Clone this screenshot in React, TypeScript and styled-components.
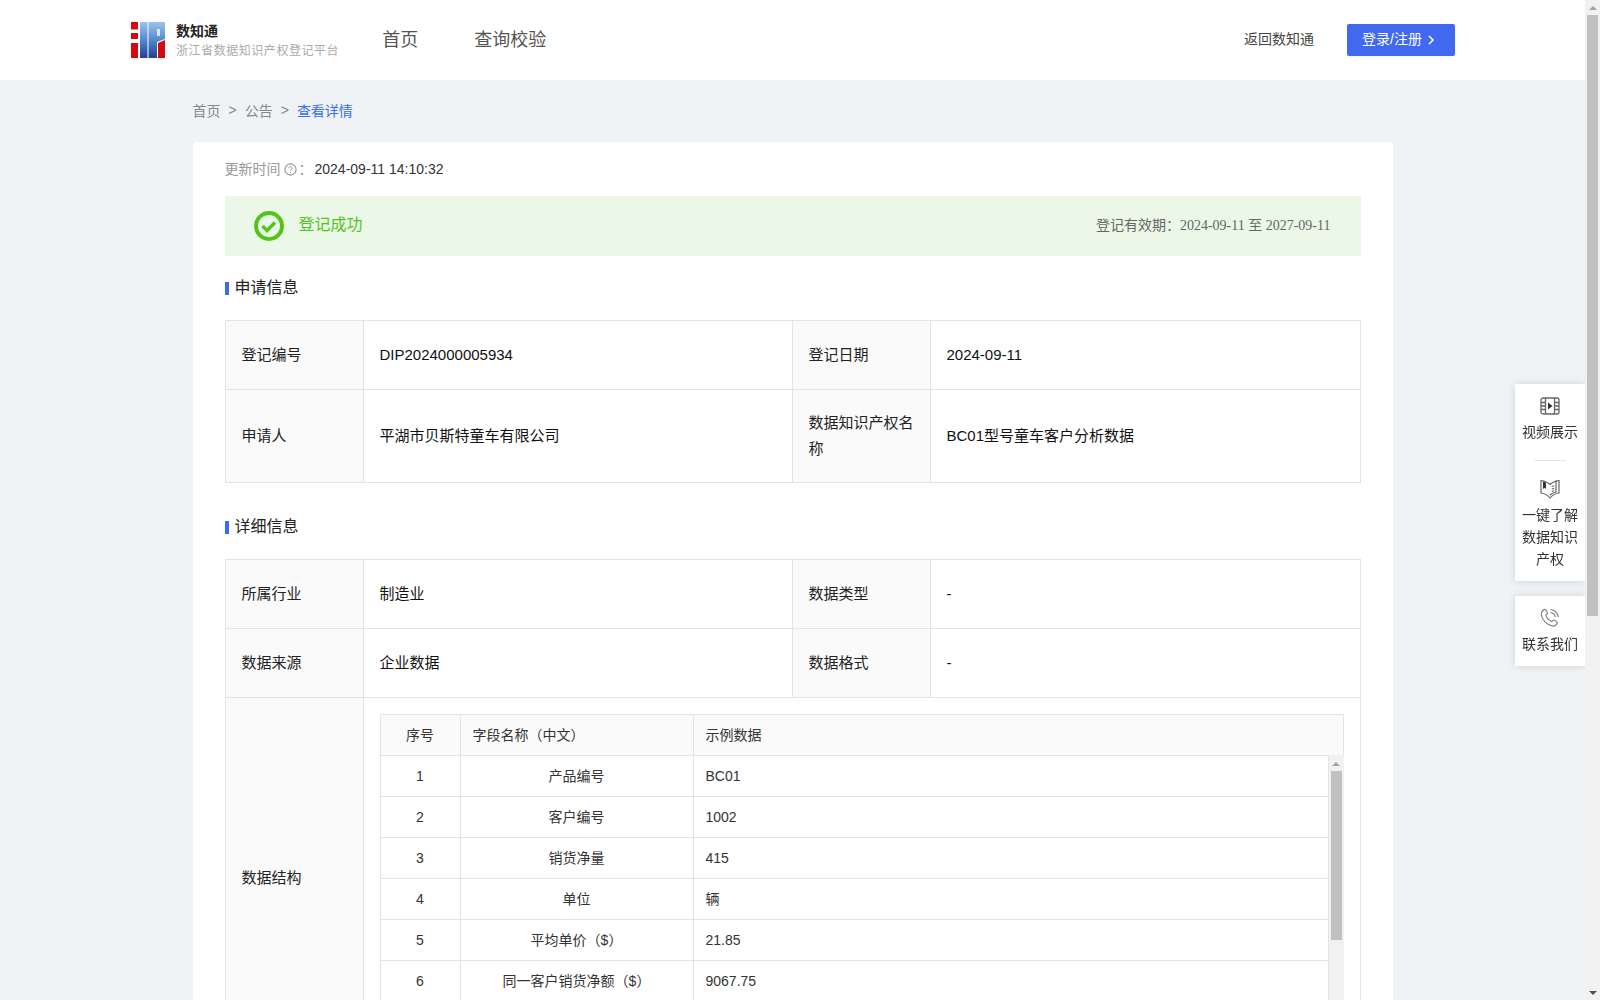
import React from "react";
import styled, { createGlobalStyle } from "styled-components";

const CJK = `"Liberation Sans", "Noto Sans CJK SC", sans-serif`;

const Global = createGlobalStyle`
  body { margin: 0; background: #eff3f6; font-family: ${CJK}; color: #222; }
  * { box-sizing: border-box; }
`;

const Page = styled.div`
  width: 1585px;
`;
const Header = styled.header`
  height: 80px;
  background: #fff;
  display: flex;
  align-items: center;
  justify-content: space-between;
  padding: 0 130px 0 131px;
`;
const Left = styled.div`
  display: flex;
  align-items: center;
`;
const Brand = styled.div`
  display: flex;
  align-items: center;
  gap: 11px;
  margin-right: 43px;
`;
const BrandText = styled.div`
  display: flex;
  flex-direction: column;
  gap: 1px;
`;
const BrandName = styled.div`
  font-size: 14px;
  line-height: 20px;
  font-weight: 700;
  color: #222;
`;
const BrandSub = styled.div`
  font-size: 12px;
  line-height: 18px;
  letter-spacing: 0.55px;
  color: #aaa;
`;
const Nav = styled.nav`
  display: flex;
  gap: 56px;
`;
const NavLink = styled.a`
  font-size: 18px;
  color: #555;
  line-height: 24px;
`;
const Right = styled.div`
  display: flex;
  align-items: center;
  gap: 33px;
`;
const BackLink = styled.a`
  font-size: 14px;
  color: #444;
  padding-bottom: 5px;
`;
const LoginButton = styled.button`
  width: 108px;
  height: 32px;
  border: 0;
  border-radius: 2px;
  background: #4169f0;
  box-shadow: 0 2px 2px rgba(0, 0, 0, 0.04);
  color: #fff;
  font-family: ${CJK};
  font-size: 14px;
  display: flex;
  align-items: center;
  justify-content: center;
  gap: 5px;
  padding: 0 5px 5px 0;
`;
const ChevronSlot = styled.span`
  display: flex;
  padding-top: 5px;
`;

const Main = styled.main`
  width: 1200px;
  margin: 0 auto;
`;
const Crumbs = styled.div`
  height: 62px;
  padding-bottom: 3px;
  display: flex;
  align-items: center;
  font-size: 14px;
  color: #888;
`;
const CrumbSep = styled.span`
  margin: 0 8px;
`;
const CrumbNow = styled.span`
  color: #3a6cf4;
`;
const Card = styled.section`
  background: #fff;
  border-radius: 4px 4px 0 0;
  padding: 16px 32px 32px;
`;
const UpdateRow = styled.div`
  display: flex;
  align-items: center;
  height: 22px;
  font-size: 14px;
  color: #999;
`;
const UpdateLabel = styled.span`
  padding-bottom: 2px;
`;
const UpdateValue = styled.span`
  margin-left: 2px;
  color: #333;
`;
const Banner = styled.div`
  margin-top: 16px;
  height: 60px;
  background: #ebf7e7;
  display: flex;
  align-items: center;
  justify-content: space-between;
  padding: 0 30px 0 29px;
`;
const BannerStatus = styled.div`
  display: flex;
  align-items: center;
  gap: 15px;
  font-size: 16px;
  color: #52c41a;
`;
const BannerLabel = styled.span`
  padding-bottom: 6px;
`;
const Validity = styled.div`
  font-size: 14px;
  color: #666;
  padding-bottom: 5px;
`;
const SerifDate = styled.span`
  font-family: "Liberation Serif", "Noto Sans CJK SC", serif;
`;
const SectionTitle = styled.h3<{ $top: number }>`
  margin: ${(p) => p.$top}px 0 21px;
  height: 22px;
  display: flex;
  align-items: center;
  gap: 6px;
  font-size: 16px;
  font-weight: 400;
  color: #222;
  &::before {
    content: "";
    width: 4px;
    height: 13px;
    margin-top: 1px;
    background: #4169f0;
  }
`;
const SectionLabel = styled.span`
  padding-bottom: 5px;
`;
const InfoTable = styled.table`
  width: 1136px;
  border-collapse: collapse;
  table-layout: fixed;
  font-size: 15px;
  line-height: 26px;
`;
const LabelCell = styled.td`
  width: 138px;
  height: 69px;
  padding: 20px 16px;
  background: #fafafa;
  border: 1px solid #e4e4e4;
  color: #222;
`;
const ValueCell = styled.td`
  padding: 20px 16px;
  background: #fff;
  border: 1px solid #e4e4e4;
  color: #111;
`;
const NestedCell = styled(ValueCell)`
  padding: 16px;
`;
const FieldsTable = styled.table`
  width: 100%;
  border-collapse: collapse;
  table-layout: fixed;
  font-size: 14px;
  color: #333;
`;
const FieldsBody = styled.div`
  display: flex;
  height: 287px;
  margin-top: -1px;
`;
const FieldsScroll = styled.div`
  flex: 1;
  min-width: 0;
  overflow: hidden;
`;
const FieldHeadCell = styled.th<{ $center?: boolean }>`
  height: 41px;
  padding: 0 12px;
  font-weight: 400;
  background: #fafafa;
  border: 1px solid #e4e4e4;
  text-align: ${(p) => (p.$center ? "center" : "left")};
`;
const FieldCell = styled.td<{ $center?: boolean }>`
  height: 41px;
  padding: 0 12px;
  border: 1px solid #e4e4e4;
  text-align: ${(p) => (p.$center ? "center" : "left")};
`;

const BarTrack = styled.div`
  flex: none;
  width: 15px;
  background: #f1f1f1;
  display: flex;
  flex-direction: column;
`;
const FieldsBar = styled(BarTrack)`
  padding-top: 1px;
`;
const PageBar = styled(BarTrack)`
  position: fixed;
  top: 0;
  right: 0;
  bottom: 0;
`;
const BarArrow = styled.div<{ $down?: boolean }>`
  flex: none;
  height: 15px;
  display: flex;
  align-items: center;
  justify-content: center;
  &::before {
    content: "";
    border-left: 4px solid transparent;
    border-right: 4px solid transparent;
    ${(p) =>
      p.$down ? "border-top: 4px solid #505050;" : "border-bottom: 4px solid #a3a3a3;"}
  }
`;
const BarThumb = styled.div<{ $h: number }>`
  flex: none;
  height: ${(p) => p.$h}px;
  margin: 0 2px;
  background: #c1c1c1;
`;
const BarFill = styled.div`
  flex: 1;
`;

const Float = styled.aside`
  position: fixed;
  right: 15px;
  top: 384px;
  width: 70px;
  display: flex;
  flex-direction: column;
  gap: 15px;
`;
const FloatPanel = styled.div`
  background: #fff;
  box-shadow: 0 0 8px rgba(0, 0, 0, 0.14);
  padding: 12px 4px 11px;
  display: flex;
  flex-direction: column;
  align-items: center;
`;
const FloatItem = styled.a`
  display: flex;
  flex-direction: column;
  align-items: center;
  gap: 5px;
  font-size: 14px;
  line-height: 22px;
  color: #333;
  text-align: center;
`;
const FloatDivider = styled.div`
  width: 32px;
  height: 1px;
  background: #e4e4e4;
  margin: 17px 0 18px;
`;

const Logo = () => (
  <svg width="34" height="36" viewBox="0 0 34 36">
    <defs>
      <linearGradient id="lg" x1="0" y1="0" x2="0" y2="1">
        <stop offset="0" stopColor="#9cc3ec" />
        <stop offset="0.45" stopColor="#5b8fd0" />
        <stop offset="1" stopColor="#1f3f8f" />
      </linearGradient>
    </defs>
    <path fill="#d40a10" d="M0 0h7v7.500H0zM0 11h7v6H0zM0 21h7v15H0z" />
    <rect x="9" width="7.500" height="36" fill="url(#lg)" />
    <path fill="url(#lg)" d="M17.500 0H34v17l-8 3v16h-8.500z" />
    <path fill="#fff" d="M26 7h3v7h-3z" opacity="0.75" />
    <path fill="#d40a10" d="M27 21l7-3v18h-7z" />
  </svg>
);

const HelpIcon = () => (
  <svg width="13" height="13" viewBox="0 0 14 14" fill="none" stroke="#999" style={{ margin: "0 2px 0 3px" }}>
    <circle cx="7" cy="7" r="6" strokeWidth="1.300" />
    <path d="M5.200 5.600a1.800 1.800 0 1 1 2.700 1.500c-.6.400-.9.700-.9 1.300" />
    <circle cx="7" cy="10.100" r=".6" fill="#999" stroke="none" />
  </svg>
);

const SuccessIcon = () => (
  <svg width="30" height="30" viewBox="0 0 30 30" fill="none">
    <circle cx="15" cy="15" r="13" stroke="#52c41a" strokeWidth="4" />
    <path d="M8.500 15l4.500 4.500 8-8" stroke="#52c41a" strokeWidth="3.500" />
  </svg>
);

const Chevron = () => (
  <svg width="8" height="10" viewBox="0 0 8 10" fill="none" stroke="#fff" strokeWidth="1.500">
    <path d="M2 1l4 4-4 4" />
  </svg>
);

const FilmIcon = () => (
  <svg width="20" height="20" viewBox="0 0 20 20" fill="none" stroke="#666" strokeWidth="1.300">
    <rect x="1" y="2" width="18" height="16" rx="2" />
    <path d="M5.500 2v16M14.500 2v16M1 6.500h4.500M1 10h4.500M1 13.500h4.500M14.500 6.500H19M14.500 10H19M14.500 13.500H19" />
    <path d="M8 6.500l4.500 3.500L8 13.500z" fill="#333" stroke="none" />
  </svg>
);

const BookIcon = () => (
  <svg width="20" height="20" viewBox="0 0 20 20" fill="none" stroke="#666" strokeWidth="1.200">
    <path d="M10 5.500C8 3.500 4.500 2 1 1.500V14c3.500.5 7 2.500 9 5 2-2.500 5.500-4.500 9-5V1.500c-1 .1-2 .3-3 .6" />
    <path d="M10 5.500C11.500 4 13 3 16 2v11c-2.500.5-4.500 1.500-6 3" />
    <path d="M3 2.500l3 1V10L4.500 8.800 3 10z" fill="#333" stroke="none" />
    <path d="M11.800 7.500l2.200-.7M11.800 10l2.200-.7M11.800 12.500l2.200-.7" />
  </svg>
);

const PhoneIcon = () => (
  <svg width="20" height="20" viewBox="0 0 20 20" fill="none" stroke="#777" strokeWidth="1.100">
    <path d="M3.500 1.800c1-.6 2-.6 2.500.2l1.300 2.200c.4.700.2 1.400-.5 1.900l-1 .7c.6 2.500 3.300 5.600 6 6.800l1-1c.6-.6 1.400-.7 2-.2l2 1.500c.7.600.7 1.500.1 2.300-1 1.300-2.600 2.200-4.300 1.800C7 17.300 2.300 11.800 1.500 7.500 1.100 5.300 2 3 3.500 1.800z" />
    <path d="M10.500 1.500c4 .3 7.300 3.500 7.800 7.500M10.500 4.500c2.500.3 4.500 2.200 4.900 4.700" />
  </svg>
);

const samples: [string, string][] = [
  ["产品编号", "BC01"],
  ["客户编号", "1002"],
  ["销货净量", "415"],
  ["单位", "辆"],
  ["平均单价\uFF08$\uFF09", "21.85"],
  ["同一客户销货净额\uFF08$\uFF09", "9067.75"],
];

const Cols = () => (
  <colgroup>
    <col style={{ width: 80 }} />
    <col style={{ width: 233 }} />
    <col />
  </colgroup>
);

const InfoCols = () => (
  <colgroup>
    <col style={{ width: 138 }} />
    <col style={{ width: 429 }} />
    <col style={{ width: 138 }} />
    <col />
  </colgroup>
);

export default function App() {
  return (
    <Page>
      <Global />
      <Header>
        <Left>
          <Brand>
            <Logo />
            <BrandText>
              <BrandName>数知通</BrandName>
              <BrandSub>浙江省数据知识产权登记平台</BrandSub>
            </BrandText>
          </Brand>
          <Nav>
            <NavLink>首页</NavLink>
            <NavLink>查询校验</NavLink>
          </Nav>
        </Left>
        <Right>
          <BackLink>返回数知通</BackLink>
          <LoginButton>
            登录/注册
            <ChevronSlot>
              <Chevron />
            </ChevronSlot>
          </LoginButton>
        </Right>
      </Header>
      <Main>
        <Crumbs>
          首页<CrumbSep>&gt;</CrumbSep>公告<CrumbSep>&gt;</CrumbSep>
          <CrumbNow>查看详情</CrumbNow>
        </Crumbs>
        <Card>
          <UpdateRow>
            <UpdateLabel>更新时间</UpdateLabel>
            <HelpIcon />
            <UpdateLabel>{"\uFF1A"}</UpdateLabel>
            <UpdateValue>2024-09-11 14:10:32</UpdateValue>
          </UpdateRow>
          <Banner>
            <BannerStatus>
              <SuccessIcon />
              <BannerLabel>登记成功</BannerLabel>
            </BannerStatus>
            <Validity>
              {"登记有效期\uFF1A"}
              <SerifDate>2024-09-11 至 2027-09-11</SerifDate>
            </Validity>
          </Banner>
          <SectionTitle $top={21}>
            <SectionLabel>申请信息</SectionLabel>
          </SectionTitle>
          <InfoTable>
            <InfoCols />
            <tbody>
              <tr>
                <LabelCell>登记编号</LabelCell>
                <ValueCell>DIP2024000005934</ValueCell>
                <LabelCell>登记日期</LabelCell>
                <ValueCell>2024-09-11</ValueCell>
              </tr>
              <tr>
                <LabelCell>申请人</LabelCell>
                <ValueCell>平湖市贝斯特童车有限公司</ValueCell>
                <LabelCell>数据知识产权名称</LabelCell>
                <ValueCell>BC01型号童车客户分析数据</ValueCell>
              </tr>
            </tbody>
          </InfoTable>
          <SectionTitle $top={33}>
            <SectionLabel>详细信息</SectionLabel>
          </SectionTitle>
          <InfoTable>
            <InfoCols />
            <tbody>
              <tr>
                <LabelCell>所属行业</LabelCell>
                <ValueCell>制造业</ValueCell>
                <LabelCell>数据类型</LabelCell>
                <ValueCell>-</ValueCell>
              </tr>
              <tr>
                <LabelCell>数据来源</LabelCell>
                <ValueCell>企业数据</ValueCell>
                <LabelCell>数据格式</LabelCell>
                <ValueCell>-</ValueCell>
              </tr>
              <tr>
                <LabelCell>数据结构</LabelCell>
                <NestedCell colSpan={3}>
                  <FieldsTable>
                    <Cols />
                    <thead>
                      <tr>
                        <FieldHeadCell $center>序号</FieldHeadCell>
                        <FieldHeadCell>{"字段名称\uFF08中文\uFF09"}</FieldHeadCell>
                        <FieldHeadCell>示例数据</FieldHeadCell>
                      </tr>
                    </thead>
                  </FieldsTable>
                  <FieldsBody>
                    <FieldsScroll>
                      <FieldsTable>
                        <Cols />
                        <tbody>
                          {samples.map(([name, value], i) => (
                            <tr key={name}>
                              <FieldCell $center>{i + 1}</FieldCell>
                              <FieldCell $center>{name}</FieldCell>
                              <FieldCell>{value}</FieldCell>
                            </tr>
                          ))}
                        </tbody>
                      </FieldsTable>
                    </FieldsScroll>
                    <FieldsBar>
                      <BarArrow />
                      <BarThumb $h={169} />
                      <BarFill />
                      <BarArrow $down />
                    </FieldsBar>
                  </FieldsBody>
                </NestedCell>
              </tr>
            </tbody>
          </InfoTable>
        </Card>
      </Main>
      <Float>
        <FloatPanel>
          <FloatItem>
            <FilmIcon />
            视频展示
          </FloatItem>
          <FloatDivider />
          <FloatItem>
            <BookIcon />
            一键了解数据知识产权
          </FloatItem>
        </FloatPanel>
        <FloatPanel>
          <FloatItem>
            <PhoneIcon />
            联系我们
          </FloatItem>
        </FloatPanel>
      </Float>
      <PageBar>
        <BarArrow />
        <BarThumb $h={601} />
        <BarFill />
        <BarArrow $down />
      </PageBar>
    </Page>
  );
}
